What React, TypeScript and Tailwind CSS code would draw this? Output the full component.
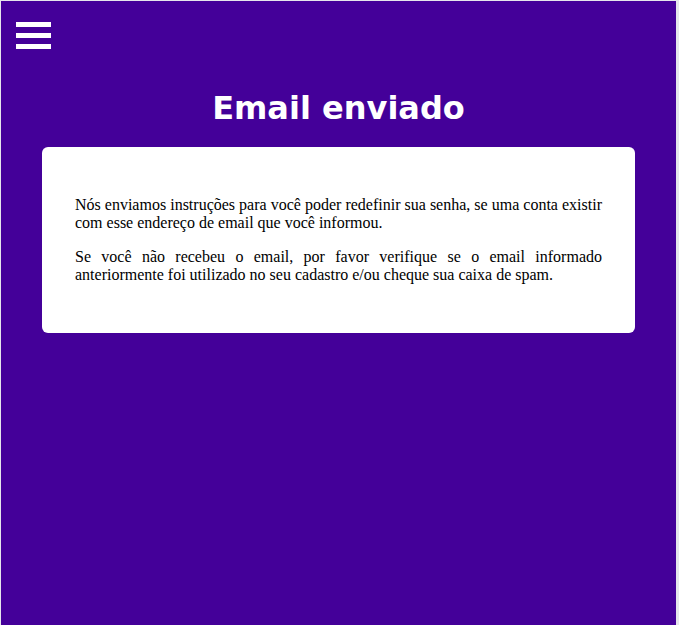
import React from 'react';

const App: React.FC = () => {
  return (
    <div className="min-h-screen bg-[#e6e6ec] pl-px pt-px pr-[3px]">
      <div className="min-h-[624px] bg-[#440099]">
        {/* Menu button */}
        <div className="px-[15px] pt-[21px]">
          <button aria-label="Menu" className="flex flex-col gap-[6px]">
            <span className="block h-[5px] w-[35px] bg-white"></span>
            <span className="block h-[5px] w-[35px] bg-white"></span>
            <span className="block h-[5px] w-[35px] bg-white"></span>
          </button>
        </div>

        <h1
          className="mt-[40px] text-center text-[32px] leading-[38px] font-bold text-white"
          style={{ fontFamily: '"DejaVu Sans", Verdana, sans-serif' }}
        >
          Email enviado
        </h1>

        {/* Message card */}
        <div
          className="mx-[41px] mt-[20px] rounded-md bg-white px-[33px] py-[33px] text-[16px] leading-[18px] text-black"
          style={{ fontFamily: '"Liberation Serif", "Times New Roman", serif' }}
        >
          <p className="my-4 text-justify">
            Nós enviamos instruções para você poder redefinir sua senha, se uma conta existir com esse endereço de email que você informou.
          </p>
          <p className="my-4 text-justify">
            Se você não recebeu o email, por favor verifique se o email informado anteriormente foi utilizado no seu cadastro e/ou cheque sua caixa de spam.
          </p>
        </div>
      </div>
    </div>
  );
};

export default App;
